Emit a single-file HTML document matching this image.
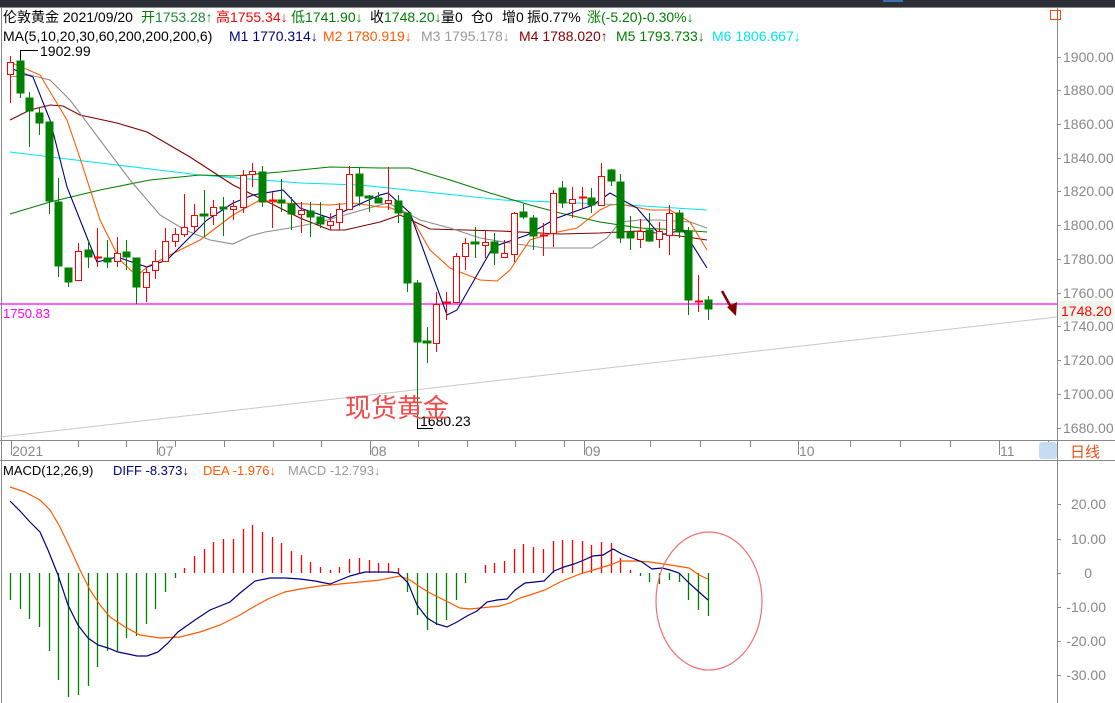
<!DOCTYPE html>
<html><head><meta charset="utf-8"><style>
html,body{margin:0;padding:0;background:#fff;}
body{width:1115px;height:703px;position:relative;overflow:hidden;font-family:"Liberation Sans","Noto Sans CJK SC",sans-serif;}
.t{position:absolute;font-size:14px;white-space:nowrap;line-height:16px;}
.s{font-size:13px;}
svg{position:absolute;left:0;top:0;}
</style></head><body>
<svg width="1115" height="703" viewBox="0 0 1115 703">
<rect x="0" y="0" width="1115" height="7" fill="#2a2e37"/>
<rect x="883" y="0" width="20" height="2" fill="#3b6fb0"/>
<line x1="0" y1="7.5" x2="1115" y2="7.5" stroke="#888"/>
<line x1="1.5" y1="8" x2="1.5" y2="703" stroke="#888"/>
<line x1="1057.5" y1="8" x2="1057.5" y2="703" stroke="#888"/>
<line x1="0" y1="440.5" x2="1115" y2="440.5" stroke="#888"/>
<line x1="0" y1="460.5" x2="1115" y2="460.5" stroke="#888"/>
<rect x="1050.5" y="10.5" width="10" height="9" fill="none" stroke="#e8501a"/>
<line x1="1057.5" y1="10" x2="1057.5" y2="20" stroke="#e8501a"/>
<g stroke="#888">
<line x1="1057" y1="57.5" x2="1061" y2="57.5"/><line x1="1057" y1="90.5" x2="1061" y2="90.5"/><line x1="1057" y1="124.5" x2="1061" y2="124.5"/><line x1="1057" y1="158.5" x2="1061" y2="158.5"/><line x1="1057" y1="191.5" x2="1061" y2="191.5"/><line x1="1057" y1="225.5" x2="1061" y2="225.5"/><line x1="1057" y1="259.5" x2="1061" y2="259.5"/><line x1="1057" y1="293.5" x2="1061" y2="293.5"/><line x1="1057" y1="326.5" x2="1061" y2="326.5"/><line x1="1057" y1="360.5" x2="1061" y2="360.5"/><line x1="1057" y1="394.5" x2="1061" y2="394.5"/><line x1="1057" y1="428.5" x2="1061" y2="428.5"/>
<line x1="1057" y1="504.5" x2="1061" y2="504.5"/><line x1="1057" y1="539.5" x2="1061" y2="539.5"/><line x1="1057" y1="573.5" x2="1061" y2="573.5"/><line x1="1057" y1="607.5" x2="1061" y2="607.5"/><line x1="1057" y1="641.5" x2="1061" y2="641.5"/><line x1="1057" y1="675.5" x2="1061" y2="675.5"/>
</g>
<g fill="#888" font-size="14" font-family="Liberation Sans,sans-serif">
<text x="1063" y="62">1900.00</text><text x="1063" y="95">1880.00</text><text x="1063" y="129">1860.00</text><text x="1063" y="163">1840.00</text><text x="1063" y="196">1820.00</text><text x="1063" y="230">1800.00</text><text x="1063" y="264">1780.00</text><text x="1063" y="298">1760.00</text><text x="1063" y="331">1740.00</text><text x="1063" y="365">1720.00</text><text x="1063" y="399">1700.00</text><text x="1063" y="433">1680.00</text>
<g text-anchor="end"><text x="1106" y="509">20.00</text><text x="1106" y="544">10.00</text><text x="1092" y="578">0</text><text x="1106" y="612">-10.00</text><text x="1106" y="646">-20.00</text><text x="1106" y="680">-30.00</text></g>
</g>
<rect x="1059" y="301" width="54" height="19" fill="#f0f5ec"/>
<text x="1061" y="316" fill="#ff0000" font-size="14" font-family="Liberation Sans,sans-serif">1748.20</text>
<g stroke="#888">
<line x1="11.5" y1="441" x2="11.5" y2="455"/><line x1="78.5" y1="441" x2="78.5" y2="447"/><line x1="126.5" y1="441" x2="126.5" y2="447"/><line x1="157.5" y1="441" x2="157.5" y2="455"/><line x1="175.5" y1="441" x2="175.5" y2="447"/><line x1="224.5" y1="441" x2="224.5" y2="447"/><line x1="273.5" y1="441" x2="273.5" y2="447"/><line x1="321.5" y1="441" x2="321.5" y2="447"/><line x1="370.5" y1="441" x2="370.5" y2="455"/><line x1="418.5" y1="441" x2="418.5" y2="447"/><line x1="467.5" y1="441" x2="467.5" y2="447"/><line x1="515.5" y1="441" x2="515.5" y2="447"/><line x1="564.5" y1="441" x2="564.5" y2="447"/><line x1="584.5" y1="441" x2="584.5" y2="455"/><line x1="650.5" y1="441" x2="650.5" y2="447"/><line x1="700.5" y1="441" x2="700.5" y2="447"/><line x1="750.5" y1="441" x2="750.5" y2="447"/><line x1="798.5" y1="441" x2="798.5" y2="455"/><line x1="850.5" y1="441" x2="850.5" y2="447"/><line x1="900.5" y1="441" x2="900.5" y2="447"/><line x1="950.5" y1="441" x2="950.5" y2="447"/><line x1="999.5" y1="441" x2="999.5" y2="455"/><line x1="1048.5" y1="441" x2="1048.5" y2="447"/>
</g>
<g fill="#888" font-size="14" font-family="Liberation Sans,sans-serif">
<text x="12" y="456">2021</text><text x="158" y="456">07</text><text x="371" y="456">08</text><text x="585" y="456">09</text><text x="799" y="456">10</text><text x="1000" y="456">11</text>
</g>
<rect x="1039" y="442" width="18" height="17" rx="3" fill="#c5dcf2"/>
<text x="1070" y="457" fill="#e8501a" font-size="15" font-family="Noto Sans CJK SC,sans-serif">日线</text>
<line x1="0" y1="437" x2="1057" y2="317" stroke="#c8c8c8"/>
<line x1="0" y1="304" x2="1057" y2="304" stroke="#ff00ff" stroke-width="1.3"/>
<g fill="none" stroke-width="1.1">
<polyline stroke="#00e5ee" points="10,152 100,163 200,175 300,183 360,185 503,200 627,205 707,210"/>
<polyline stroke="#008000" points="10,214 50,202 100,190 150,180 200,175 233,176 280,172 330,167 380,168 410,168 450,180 490,193 530,205 560,213 600,222 640,228 680,230 707,232"/>
<polyline stroke="#800000" points="10,120 30,110 50,105 63,106 80,115 117,123 147,132 190,157 233,185 270,203 300,218 330,230 345,230 380,222 400,215 430,229 500,231 560,234 600,233 640,231 680,236 707,240"/>
<polyline stroke="#8c8c8c" points="10,77 30,75 50,80 70,100 100,140 130,180 160,215 185,230 210,240 233,244 250,236 265,232 290,228 320,222 380,205 388,203 420,220 450,228 480,238 510,243 545,248 592,248 607,238 620,222 640,220 660,220 690,222 707,228"/>
<polyline stroke="#ff5a00" points="10,62 40,75 67,120 80,158 100,220 120,260 137,276 147,267 170,255 200,240 233,215 260,200 283,203 330,205 353,203 380,207 388,207 410,215 430,250 450,268 480,280 497,281 510,270 530,240 553,233 577,228 600,210 610,205 620,204 650,210 670,210 690,222 707,250"/>
<polyline stroke="#000080" points="10,68 33,77 50,120 67,187 88,240 97,262 117,257 147,267 167,260 187,240 207,220 233,203 253,195 283,190 300,208 330,218 353,207 380,195 388,193 410,213 447,315 457,310 493,247 527,235 557,218 593,205 610,193 637,208 660,235 683,230 707,268"/>
</g>
<g stroke-width="1">
<g stroke="#008000" fill="#008000">
<line x1="20.5" y1="52" x2="20.5" y2="98"/><rect x="17" y="61" width="7" height="32"/>
<line x1="29.5" y1="92" x2="29.5" y2="147"/><rect x="26" y="98" width="7" height="13"/>
<line x1="39.5" y1="108" x2="39.5" y2="135"/><rect x="36" y="113" width="7" height="10"/>
<line x1="49.5" y1="122" x2="49.5" y2="214"/><rect x="46" y="122" width="7" height="79"/>
<line x1="58.5" y1="178" x2="58.5" y2="277"/><rect x="55" y="202" width="7" height="64"/>
<line x1="68.5" y1="268" x2="68.5" y2="287"/><rect x="65" y="268" width="7" height="14"/>
<line x1="88.5" y1="240" x2="88.5" y2="268"/><rect x="85" y="250" width="7" height="7"/>
<line x1="107.5" y1="240" x2="107.5" y2="268"/><rect x="104" y="258" width="7" height="4"/>
<line x1="126.5" y1="240" x2="126.5" y2="270"/><rect x="123" y="252" width="7" height="5"/>
<line x1="136.5" y1="258" x2="136.5" y2="304"/><rect x="133" y="258" width="7" height="29"/>
<line x1="204.5" y1="190" x2="204.5" y2="237"/><rect x="200" y="214" width="8" height="2"/>
<line x1="223.5" y1="197" x2="223.5" y2="236"/><rect x="220" y="207" width="7" height="2"/>
<line x1="262.5" y1="166" x2="262.5" y2="207"/><rect x="259" y="172" width="7" height="30"/>
<line x1="281.5" y1="179" x2="281.5" y2="212"/><rect x="278" y="200" width="7" height="3"/>
<line x1="291.5" y1="197" x2="291.5" y2="230"/><rect x="288" y="204" width="7" height="10"/>
<line x1="310.5" y1="202" x2="310.5" y2="237"/><rect x="307" y="211" width="7" height="6"/>
<line x1="320.5" y1="202" x2="320.5" y2="228"/><rect x="317" y="217" width="7" height="7"/>
<line x1="359.5" y1="167" x2="359.5" y2="206"/><rect x="356" y="174" width="7" height="22"/>
<line x1="369.5" y1="195" x2="369.5" y2="212"/><rect x="365" y="196" width="8" height="2"/>
<line x1="378.5" y1="192" x2="378.5" y2="203"/><rect x="375" y="198" width="7" height="5"/>
<line x1="398.5" y1="195" x2="398.5" y2="223"/><rect x="395" y="201" width="7" height="12"/>
<line x1="407.5" y1="213" x2="407.5" y2="292"/><rect x="404" y="213" width="7" height="70"/>
<line x1="417.5" y1="280" x2="417.5" y2="428"/><rect x="414" y="283" width="7" height="59"/>
<line x1="427.5" y1="327" x2="427.5" y2="363"/><rect x="423" y="341" width="8" height="2"/>
<line x1="475.5" y1="227" x2="475.5" y2="258"/><rect x="471" y="242" width="8" height="2"/>
<line x1="494.5" y1="233" x2="494.5" y2="265"/><rect x="491" y="242" width="7" height="11"/>
<line x1="523.5" y1="204" x2="523.5" y2="219"/><rect x="520" y="212" width="7" height="5"/>
<line x1="533.5" y1="215" x2="533.5" y2="250"/><rect x="530" y="218" width="7" height="18"/>
<line x1="562.5" y1="181" x2="562.5" y2="208"/><rect x="559" y="188" width="7" height="15"/>
<line x1="591.5" y1="188" x2="591.5" y2="213"/><rect x="588" y="198" width="7" height="7"/>
<line x1="611.5" y1="169" x2="611.5" y2="186"/><rect x="608" y="170" width="7" height="11"/>
<line x1="620.5" y1="174" x2="620.5" y2="243"/><rect x="617" y="182" width="7" height="56"/>
<line x1="630.5" y1="216" x2="630.5" y2="250"/><rect x="627" y="232" width="7" height="6"/>
<line x1="649.5" y1="213" x2="649.5" y2="242"/><rect x="646" y="230" width="7" height="11"/>
<line x1="679.5" y1="210" x2="679.5" y2="238"/><rect x="676" y="213" width="7" height="19"/>
<line x1="688.5" y1="227" x2="688.5" y2="315"/><rect x="685" y="231" width="7" height="69"/>
<line x1="708.5" y1="296" x2="708.5" y2="320"/><rect x="705" y="300" width="7" height="9"/>
</g>
<g stroke="#ff0000">
<line x1="10.5" y1="56" x2="10.5" y2="103"/><rect x="7.5" y="62.5" width="6" height="12" fill="#fff"/>
<line x1="78.5" y1="243" x2="78.5" y2="281"/><rect x="75.5" y="251.5" width="6" height="29" fill="#fff"/>
<line x1="97.5" y1="228" x2="97.5" y2="267"/><line x1="94" y1="257.5" x2="102" y2="257.5" stroke-width="2"/>
<line x1="117.5" y1="237" x2="117.5" y2="267"/><rect x="114.5" y="253.5" width="6" height="8" fill="#fff"/>
<line x1="146.5" y1="267" x2="146.5" y2="302"/><rect x="143.5" y="272.5" width="6" height="15" fill="#fff"/>
<line x1="155.5" y1="250" x2="155.5" y2="279"/><rect x="152.5" y="261.5" width="6" height="9" fill="#fff"/>
<line x1="165.5" y1="228" x2="165.5" y2="262"/><rect x="162.5" y="241.5" width="6" height="20" fill="#fff"/>
<line x1="175.5" y1="228" x2="175.5" y2="247"/><rect x="172.5" y="234.5" width="6" height="7" fill="#fff"/>
<line x1="184.5" y1="194" x2="184.5" y2="237"/><rect x="181.5" y="227.5" width="6" height="7" fill="#fff"/>
<line x1="194.5" y1="204" x2="194.5" y2="232"/><rect x="191.5" y="215.5" width="6" height="11" fill="#fff"/>
<line x1="213.5" y1="200" x2="213.5" y2="225"/><rect x="210.5" y="207.5" width="6" height="8" fill="#fff"/>
<line x1="233.5" y1="200" x2="233.5" y2="220"/><rect x="230.5" y="206.5" width="6" height="3" fill="#fff"/>
<line x1="243.5" y1="170" x2="243.5" y2="213"/><rect x="240.5" y="175.5" width="6" height="32" fill="#fff"/>
<line x1="252.5" y1="163" x2="252.5" y2="187"/><rect x="249.5" y="171.5" width="6" height="3" fill="#fff"/>
<line x1="272.5" y1="192" x2="272.5" y2="228"/><line x1="269" y1="200.5" x2="277" y2="200.5" stroke-width="2"/>
<line x1="301.5" y1="202" x2="301.5" y2="233"/><rect x="298.5" y="210.5" width="6" height="4" fill="#fff"/>
<line x1="330.5" y1="213" x2="330.5" y2="230"/><rect x="327.5" y="221.5" width="6" height="4" fill="#fff"/>
<line x1="339.5" y1="203" x2="339.5" y2="230"/><rect x="336.5" y="209.5" width="6" height="13" fill="#fff"/>
<line x1="349.5" y1="166" x2="349.5" y2="210"/><rect x="346.5" y="174.5" width="6" height="35" fill="#fff"/>
<line x1="388.5" y1="167" x2="388.5" y2="210"/><rect x="385.5" y="200.5" width="6" height="3" fill="#fff"/>
<line x1="436.5" y1="292" x2="436.5" y2="352"/><rect x="433.5" y="304.5" width="6" height="39" fill="#fff"/>
<line x1="446.5" y1="292" x2="446.5" y2="320"/><line x1="443" y1="302.5" x2="451" y2="302.5" stroke-width="2"/>
<line x1="456.5" y1="253" x2="456.5" y2="303"/><rect x="453.5" y="256.5" width="6" height="46" fill="#fff"/>
<line x1="465.5" y1="238" x2="465.5" y2="270"/><rect x="462.5" y="243.5" width="6" height="13" fill="#fff"/>
<line x1="485.5" y1="230" x2="485.5" y2="258"/><rect x="482.5" y="242.5" width="6" height="3" fill="#fff"/>
<line x1="504.5" y1="240" x2="504.5" y2="258"/><rect x="501.5" y="253.5" width="6" height="4" fill="#fff"/>
<line x1="514.5" y1="212" x2="514.5" y2="262"/><rect x="511.5" y="213.5" width="6" height="41" fill="#fff"/>
<line x1="543.5" y1="223" x2="543.5" y2="256"/><line x1="540" y1="235.5" x2="548" y2="235.5" stroke-width="2"/>
<line x1="553.5" y1="190" x2="553.5" y2="247"/><rect x="550.5" y="193.5" width="6" height="40" fill="#fff"/>
<line x1="572.5" y1="187" x2="572.5" y2="218"/><rect x="569.5" y="199.5" width="6" height="4" fill="#fff"/>
<line x1="582.5" y1="187" x2="582.5" y2="208"/><line x1="579" y1="197.5" x2="587" y2="197.5" stroke-width="2"/>
<line x1="601.5" y1="163" x2="601.5" y2="205"/><rect x="598.5" y="176.5" width="6" height="29" fill="#fff"/>
<line x1="640.5" y1="219" x2="640.5" y2="248"/><rect x="637.5" y="231.5" width="6" height="8" fill="#fff"/>
<line x1="659.5" y1="222" x2="659.5" y2="248"/><rect x="656.5" y="231.5" width="6" height="8" fill="#fff"/>
<line x1="669.5" y1="205" x2="669.5" y2="255"/><rect x="666.5" y="213.5" width="6" height="22" fill="#fff"/>
<line x1="698.5" y1="275" x2="698.5" y2="312"/><line x1="695" y1="301.5" x2="703" y2="301.5" stroke-width="2"/>
</g>
</g>
<polyline points="20.5,60 20.5,50.5 38,50.5" fill="none" stroke="#000"/>
<text x="40" y="56" font-size="14" font-family="Liberation Sans,sans-serif" fill="#000">1902.99</text>
<polyline points="417.5,420 417.5,428.5 433,428.5" fill="none" stroke="#000"/>
<text x="420" y="426" font-size="14" font-family="Liberation Sans,sans-serif" fill="#000">1680.23</text>
<text x="345" y="417" font-size="26" font-family="Noto Sans CJK SC,sans-serif" fill="#f24a4a">现货黄金</text>
<line x1="722" y1="291" x2="732" y2="309" stroke="#800000" stroke-width="2.5"/>
<polygon points="727,307 737,302 736,316" fill="#800000"/>
<path stroke="#008000" stroke-width="1.3" fill="none" d="M10.5 573V600M20.5 573V609M29.5 573V619M39.5 573V627M49.5 573V651M58.5 573V680M68.5 573V697M78.5 573V695M88.5 573V686M97.5 573V667M107.5 573V651M117.5 573V651M126.5 573V638M136.5 573V636M146.5 573V624M155.5 573V609M165.5 573V592M175.5 573V578M407.5 573V592M417.5 573V615M427.5 573V630M436.5 573V625M446.5 573V620M456.5 573V600M465.5 573V583M640.5 573V576M649.5 573V582M659.5 573V584M669.5 573V580M679.5 573V582M688.5 573V600M698.5 573V610M708.5 573V616"/>
<path stroke="#ff0000" stroke-width="1.3" fill="none" d="M184.5 573V568M194.5 573V556M204.5 573V549M213.5 573V542M223.5 573V539M233.5 573V539M243.5 573V529M252.5 573V525M262.5 573V532M272.5 573V537M281.5 573V543M291.5 573V551M301.5 573V555M310.5 573V562M320.5 573V567M330.5 573V570M339.5 573V567M349.5 573V559M359.5 573V558M369.5 573V560M378.5 573V563M388.5 573V563M398.5 573V568M485.5 573V565M494.5 573V563M504.5 573V561M514.5 573V549M523.5 573V544M533.5 573V547M543.5 573V549M553.5 573V541M562.5 573V540M572.5 573V540M582.5 573V541M591.5 573V545M601.5 573V542M611.5 573V543M620.5 573V558M630.5 573V570"/>
<g fill="none" stroke-width="1.2">
<polyline stroke="#ff5a00" points="10,487 25,492 40,500 50,510 60,527 70,548 80,570 90,590 100,605 110,617 125,627 140,635 160,638 180,637 200,632 220,625 240,615 255,606 270,598 285,592 300,589 320,586 340,584 360,582 380,580 400,576 410,580 420,587 430,593 440,598 450,603 460,608 470,609 480,608 490,607 500,606 510,603 520,598 530,595 545,590 560,582 580,574 600,568 613,564 620,561 635,561 650,562 670,565 689,568 699,575 708,579"/>
<polyline stroke="#000080" points="10,501 20,511 30,522 40,532 48,550 58,575 68,605 78,625 88,638 98,645 108,648 118,652 128,654 137,656 147,656 158,652 168,643 178,632 195,620 210,610 230,602 240,593 255,581 270,578 285,578 300,579 315,581 330,584 340,580 350,576 365,572 390,572 398,573 408,583 417,605 427,618 437,624 447,627 457,622 467,616 477,611 487,602 497,600 507,599 515,590 525,583 535,582 544,581 554,571 564,567 574,564 584,560 593,556 603,555 613,549 622,554 632,558 642,562 652,569 662,568 670,570 679,573 689,583 699,592 708,600"/>
</g>
<ellipse cx="709" cy="601" rx="53" ry="69" fill="none" stroke="#f07070" stroke-width="1.2"/>
</svg>
<div class="t" style="left:3px;top:9px;">伦敦黄金 2021/09/20</div>
<div class="t" style="left:141px;top:9px;color:#008000;">开<span style="color:#1a8a3a">1753.28↑</span></div>
<div class="t" style="left:216px;top:9px;color:#ff0000;">高1755.34↓</div>
<div class="t" style="left:291px;top:9px;color:#008000;">低1741.90↓</div>
<div class="t" style="left:370px;top:9px;color:#008000;"><span style="color:#000">收</span>1748.20↓</div>
<div class="t" style="left:441px;top:9px;">量0</div>
<div class="t" style="left:471px;top:9px;">仓0</div>
<div class="t" style="left:502px;top:9px;">增0</div>
<div class="t" style="left:527px;top:9px;">振0.77%</div>
<div class="t" style="left:587px;top:9px;color:#008000;">涨(-5.20)-0.30%↓</div>
<div class="t" style="left:3px;top:28px;">MA(5,10,20,30,60,200,200,200,6)</div>
<div class="t" style="left:229px;top:28px;color:#000080;">M1 1770.314↓</div>
<div class="t" style="left:323px;top:28px;color:#ff5a00;">M2 1780.919↓</div>
<div class="t" style="left:421px;top:28px;color:#999;">M3 1795.178↓</div>
<div class="t" style="left:519px;top:28px;color:#8b0000;">M4 1788.020↑</div>
<div class="t" style="left:616px;top:28px;color:#008000;">M5 1793.733↓</div>
<div class="t" style="left:712px;top:28px;color:#00e5ee;">M6 1806.667↓</div>
<div class="t s" style="left:3px;top:306px;color:#ff00ff;">1750.83</div>
<div class="t s" style="left:3px;top:463px;">MACD(12,26,9)</div>
<div class="t s" style="left:113px;top:463px;color:#000080;">DIFF -8.373↓</div>
<div class="t s" style="left:203px;top:463px;color:#ff5a00;">DEA -1.976↓</div>
<div class="t s" style="left:288px;top:463px;color:#999;">MACD -12.793↓</div>
</body></html>
